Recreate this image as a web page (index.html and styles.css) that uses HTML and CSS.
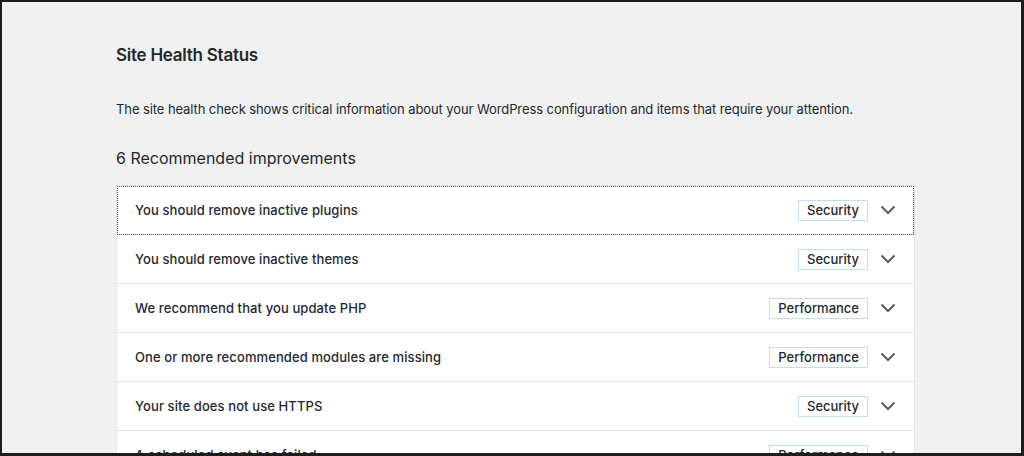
FILE: index.html
```html
<!DOCTYPE html>
<html lang="en">
<head>
<meta charset="utf-8">
<title>Site Health Status</title>
<link rel="stylesheet" href="styles.css">
</head>
<body>
<div class="frame">
  <main class="content">
    <h1 class="title">Site Health Status</h1>
    <p class="intro">The site health check shows critical information about your WordPress configuration and items that require your attention.</p>
    <h2 class="subtitle">6 Recommended improvements</h2>
    <div class="list">
      <div class="row focused">
        <span class="label">You should remove inactive plugins</span>
        <span class="badge">Security</span>
        <svg class="chev" viewBox="0 0 16 10"><path d="M1.5 1.5 L8 8 L14.5 1.5"/></svg>
      </div>
      <div class="row">
        <span class="label">You should remove inactive themes</span>
        <span class="badge">Security</span>
        <svg class="chev" viewBox="0 0 16 10"><path d="M1.5 1.5 L8 8 L14.5 1.5"/></svg>
      </div>
      <div class="row">
        <span class="label">We recommend that you update PHP</span>
        <span class="badge">Performance</span>
        <svg class="chev" viewBox="0 0 16 10"><path d="M1.5 1.5 L8 8 L14.5 1.5"/></svg>
      </div>
      <div class="row">
        <span class="label">One or more recommended modules are missing</span>
        <span class="badge">Performance</span>
        <svg class="chev" viewBox="0 0 16 10"><path d="M1.5 1.5 L8 8 L14.5 1.5"/></svg>
      </div>
      <div class="row">
        <span class="label">Your site does not use HTTPS</span>
        <span class="badge">Security</span>
        <svg class="chev" viewBox="0 0 16 10"><path d="M1.5 1.5 L8 8 L14.5 1.5"/></svg>
      </div>
      <div class="row">
        <span class="label">A scheduled event has failed</span>
        <span class="badge">Performance</span>
        <svg class="chev" viewBox="0 0 16 10"><path d="M1.5 1.5 L8 8 L14.5 1.5"/></svg>
      </div>
    </div>
  </main>
</div>
</body>
</html>
```

FILE: styles.css
```css
html, body {
  margin: 0;
  padding: 0;
  background: #f1f1f1;
}

.frame {
  box-sizing: border-box;
  width: 1024px;
  height: 456px;
  overflow: hidden;
  background: #f1f1f1;
  border-style: solid;
  border-color: #1d1d1d;
  border-width: 2px 3px 3px 2px;
  font-family: Inter, Roboto, "Liberation Sans", sans-serif;
  color: #23282d;
}

.content {
  width: 799px;
  margin-left: 114px;
  padding-top: 41px;
}

.title {
  margin: 0;
  font-size: 17px;
  font-weight: 600;
  line-height: 24px;
  letter-spacing: -0.25px;
}

.intro {
  margin: 32px 0 0;
  font-size: 13px;
  line-height: 20px;
  letter-spacing: -0.09px;
}

.subtitle {
  margin: 27px 0 0;
  font-size: 16px;
  font-weight: 400;
  line-height: 24px;
}

.list {
  margin-top: 15px;
  background: #fff;
  border: 1px solid #e2e4e7;
  border-bottom: 0;
}

.row {
  display: flex;
  align-items: center;
  height: 48px;
  padding: 0 18px 0 18px;
  border-bottom: 1px solid #e2e4e7;
}

.row.focused {
  outline: 1px dotted #4a4f55;
  outline-offset: -1px;
}

.label {
  flex: 1;
  font-size: 13px;
  font-weight: 500;
  letter-spacing: 0.1px;
}

.badge {
  box-sizing: border-box;
  height: 21px;
  line-height: 19px;
  padding: 0 8px;
  border: 1px solid #bfe1ee;
  font-size: 13px;
  font-weight: 500;
}

.chev {
  width: 16px;
  height: 10px;
  margin-left: 12px;
  fill: none;
  stroke: #555d66;
  stroke-width: 2;
}
```
